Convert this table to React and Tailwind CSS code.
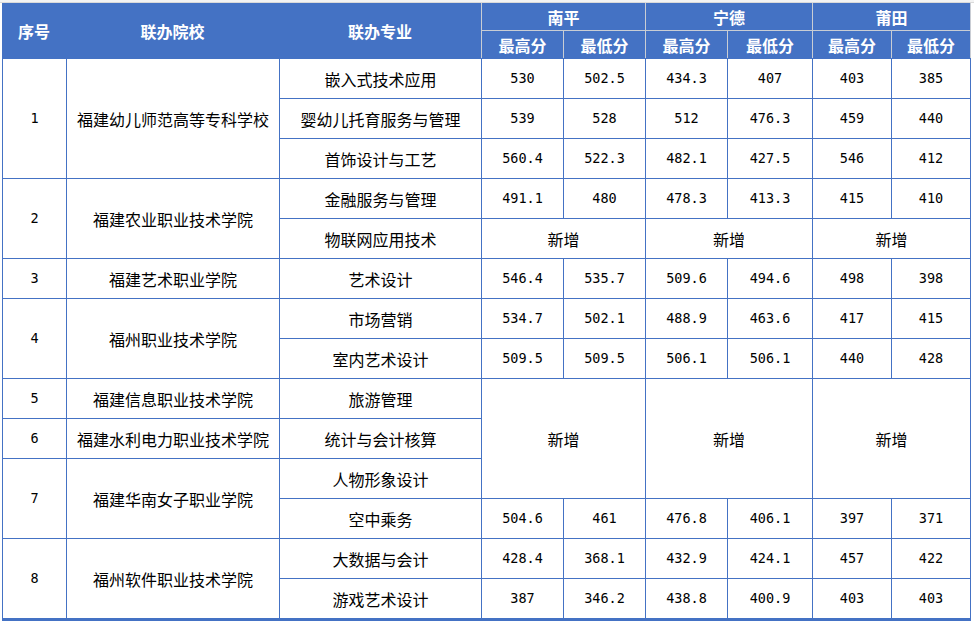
const cjk = "font-['Noto_Sans_CJK_SC','Noto_Sans',sans-serif]";
const num = "font-['DejaVu_Sans_Mono','Liberation_Mono',monospace] text-[13.5px]";

function Cell({ children, className = "", mono }) {
  return (
    <div
      className={`bg-white flex items-center justify-center text-black ${
        mono ? num : `${cjk} text-[16px]`
      } ${className}`}
    >
      {children}
    </div>
  );
}

function Nums({ values }) {
  return values.map((v, i) => (
    <Cell key={i} mono>
      {v}
    </Cell>
  ));
}

function Added({ tall }) {
  return [0, 1, 2].map((i) => (
    <Cell key={i} className={tall ? "col-span-2 row-span-3" : "col-span-2"}>
      新增
    </Cell>
  ));
}

export default function App() {
  return (
    <div className="w-[974px] h-[622px] bg-white overflow-hidden">
      <div className="h-[3px] bg-[#f3f3f3] border-b border-[#dadada]" />
      <div className="pl-[2px]">
        {/* 表头 */}
        <div className={`flex h-[55px] text-white font-bold text-[16px] ${cjk}`}>
          <div className="grid grid-cols-[64px_213px_202px] bg-[#4472c4]">
            <div className="flex items-center justify-center">序号</div>
            <div className="flex items-center justify-center">联办院校</div>
            <div className="flex items-center justify-center">联办专业</div>
          </div>
          <div className="grid grid-cols-[81px_81px_81px_84px_78px_78px] grid-rows-[27px_27px] gap-px bg-[#c9cdd4] px-px">
            <div className="col-span-2 bg-[#4472c4] flex items-center justify-center">南平</div>
            <div className="col-span-2 bg-[#4472c4] flex items-center justify-center">宁德</div>
            <div className="col-span-2 bg-[#4472c4] flex items-center justify-center">莆田</div>
            {[0, 1, 2].map((i) => [
              <div key={`h${i}`} className="bg-[#4472c4] flex items-center justify-center">最高分</div>,
              <div key={`l${i}`} className="bg-[#4472c4] flex items-center justify-center">最低分</div>,
            ])}
          </div>
        </div>

        {/* 数据 */}
        <div className="grid w-[969px] grid-cols-[63px_212px_201px_81px_81px_81px_84px_78px_78px] grid-rows-[repeat(14,39px)] gap-px bg-[#4472c4] px-px pt-px pb-[3px]">
          <Cell className="row-span-3" mono>1</Cell>
          <Cell className="row-span-3">福建幼儿师范高等专科学校</Cell>
          <Cell>嵌入式技术应用</Cell>
          <Nums values={["530", "502.5", "434.3", "407", "403", "385"]} />
          <Cell>婴幼儿托育服务与管理</Cell>
          <Nums values={["539", "528", "512", "476.3", "459", "440"]} />
          <Cell>首饰设计与工艺</Cell>
          <Nums values={["560.4", "522.3", "482.1", "427.5", "546", "412"]} />

          <Cell className="row-span-2" mono>2</Cell>
          <Cell className="row-span-2">福建农业职业技术学院</Cell>
          <Cell>金融服务与管理</Cell>
          <Nums values={["491.1", "480", "478.3", "413.3", "415", "410"]} />
          <Cell>物联网应用技术</Cell>
          <Added />

          <Cell mono>3</Cell>
          <Cell>福建艺术职业学院</Cell>
          <Cell>艺术设计</Cell>
          <Nums values={["546.4", "535.7", "509.6", "494.6", "498", "398"]} />

          <Cell className="row-span-2" mono>4</Cell>
          <Cell className="row-span-2">福州职业技术学院</Cell>
          <Cell>市场营销</Cell>
          <Nums values={["534.7", "502.1", "488.9", "463.6", "417", "415"]} />
          <Cell>室内艺术设计</Cell>
          <Nums values={["509.5", "509.5", "506.1", "506.1", "440", "428"]} />

          <Cell mono>5</Cell>
          <Cell>福建信息职业技术学院</Cell>
          <Cell>旅游管理</Cell>
          <Added tall />

          <Cell mono>6</Cell>
          <Cell>福建水利电力职业技术学院</Cell>
          <Cell>统计与会计核算</Cell>

          <Cell className="row-span-2" mono>7</Cell>
          <Cell className="row-span-2">福建华南女子职业学院</Cell>
          <Cell>人物形象设计</Cell>
          <Cell>空中乘务</Cell>
          <Nums values={["504.6", "461", "476.8", "406.1", "397", "371"]} />

          <Cell className="row-span-2" mono>8</Cell>
          <Cell className="row-span-2">福州软件职业技术学院</Cell>
          <Cell>大数据与会计</Cell>
          <Nums values={["428.4", "368.1", "432.9", "424.1", "457", "422"]} />
          <Cell>游戏艺术设计</Cell>
          <Nums values={["387", "346.2", "438.8", "400.9", "403", "403"]} />
        </div>
      </div>
    </div>
  );
}
